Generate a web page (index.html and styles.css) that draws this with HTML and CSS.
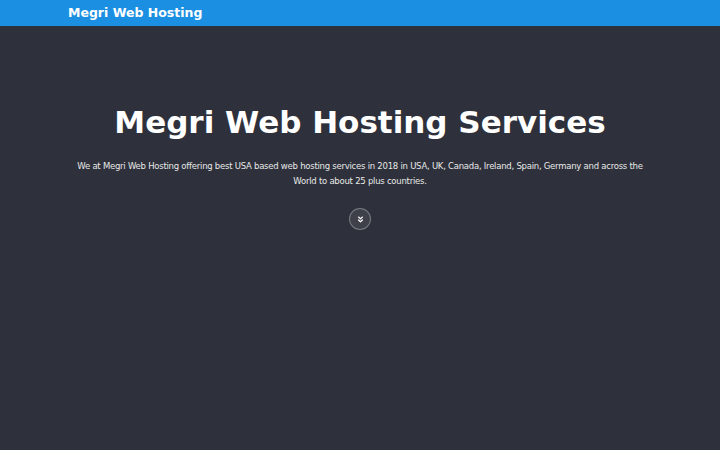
FILE: index.html
```html
<!DOCTYPE html>
<html>
<head>
<meta charset="utf-8">
<link rel="stylesheet" href="styles.css">
</head>
<body>
<header class="topbar">
  <div class="container">
    <a class="brand" href="#">Megri Web Hosting</a>
  </div>
</header>
<main class="hero">
  <div class="container hero-inner">
    <h1 class="title">Megri Web Hosting Services</h1>
    <p class="lead">We at Megri Web Hosting offering best USA based web hosting services in 2018 in USA, UK, Canada, Ireland, Spain, Germany and across the World to about 25 plus countries.</p>
    <a class="scroll-btn" href="#">
      <svg width="7" height="7" viewBox="0 0 8 8" fill="none" stroke="#ffffff" stroke-width="1.4" stroke-linecap="round" stroke-linejoin="round"><path d="M1.8 1.2 L4 3.3 L6.2 1.2"/><path d="M1.8 4.5 L4 6.6 L6.2 4.5"/></svg>
    </a>
  </div>
</main>
</body>
</html>
```
FILE: styles.css
```css
html, body {
  margin: 0;
  padding: 0;
  height: 100%;
}
body {
  background: #2e313b;
  font-family: "DejaVu Sans", sans-serif;
  color: #ffffff;
}
.container {
  width: 584px;
  margin: 0 auto;
}
.topbar {
  background: #1b8fe1;
  height: 26px;
  display: flex;
  align-items: center;
}
.brand {
  color: #ffffff;
  text-decoration: none;
  font-weight: bold;
  font-size: 12.5px;
  line-height: 26px;
}
.hero-inner {
  display: flex;
  flex-direction: column;
  align-items: center;
  text-align: center;
  padding-top: 77px;
}
.title {
  margin: 0;
  font-size: 31px;
  line-height: 38px;
  font-weight: bold;
}
.lead {
  margin: 18px 0 0;
  font-size: 8.5px;
  letter-spacing: -0.25px;
  line-height: 15px;
  color: #e8e8e8;
}
.scroll-btn {
  margin-top: 19px;
  width: 20px;
  height: 20px;
  border-radius: 50%;
  border: 1px solid rgba(255, 255, 255, 0.3);
  background: rgba(255, 255, 255, 0.08);
  display: flex;
  align-items: center;
  justify-content: center;
}
```
